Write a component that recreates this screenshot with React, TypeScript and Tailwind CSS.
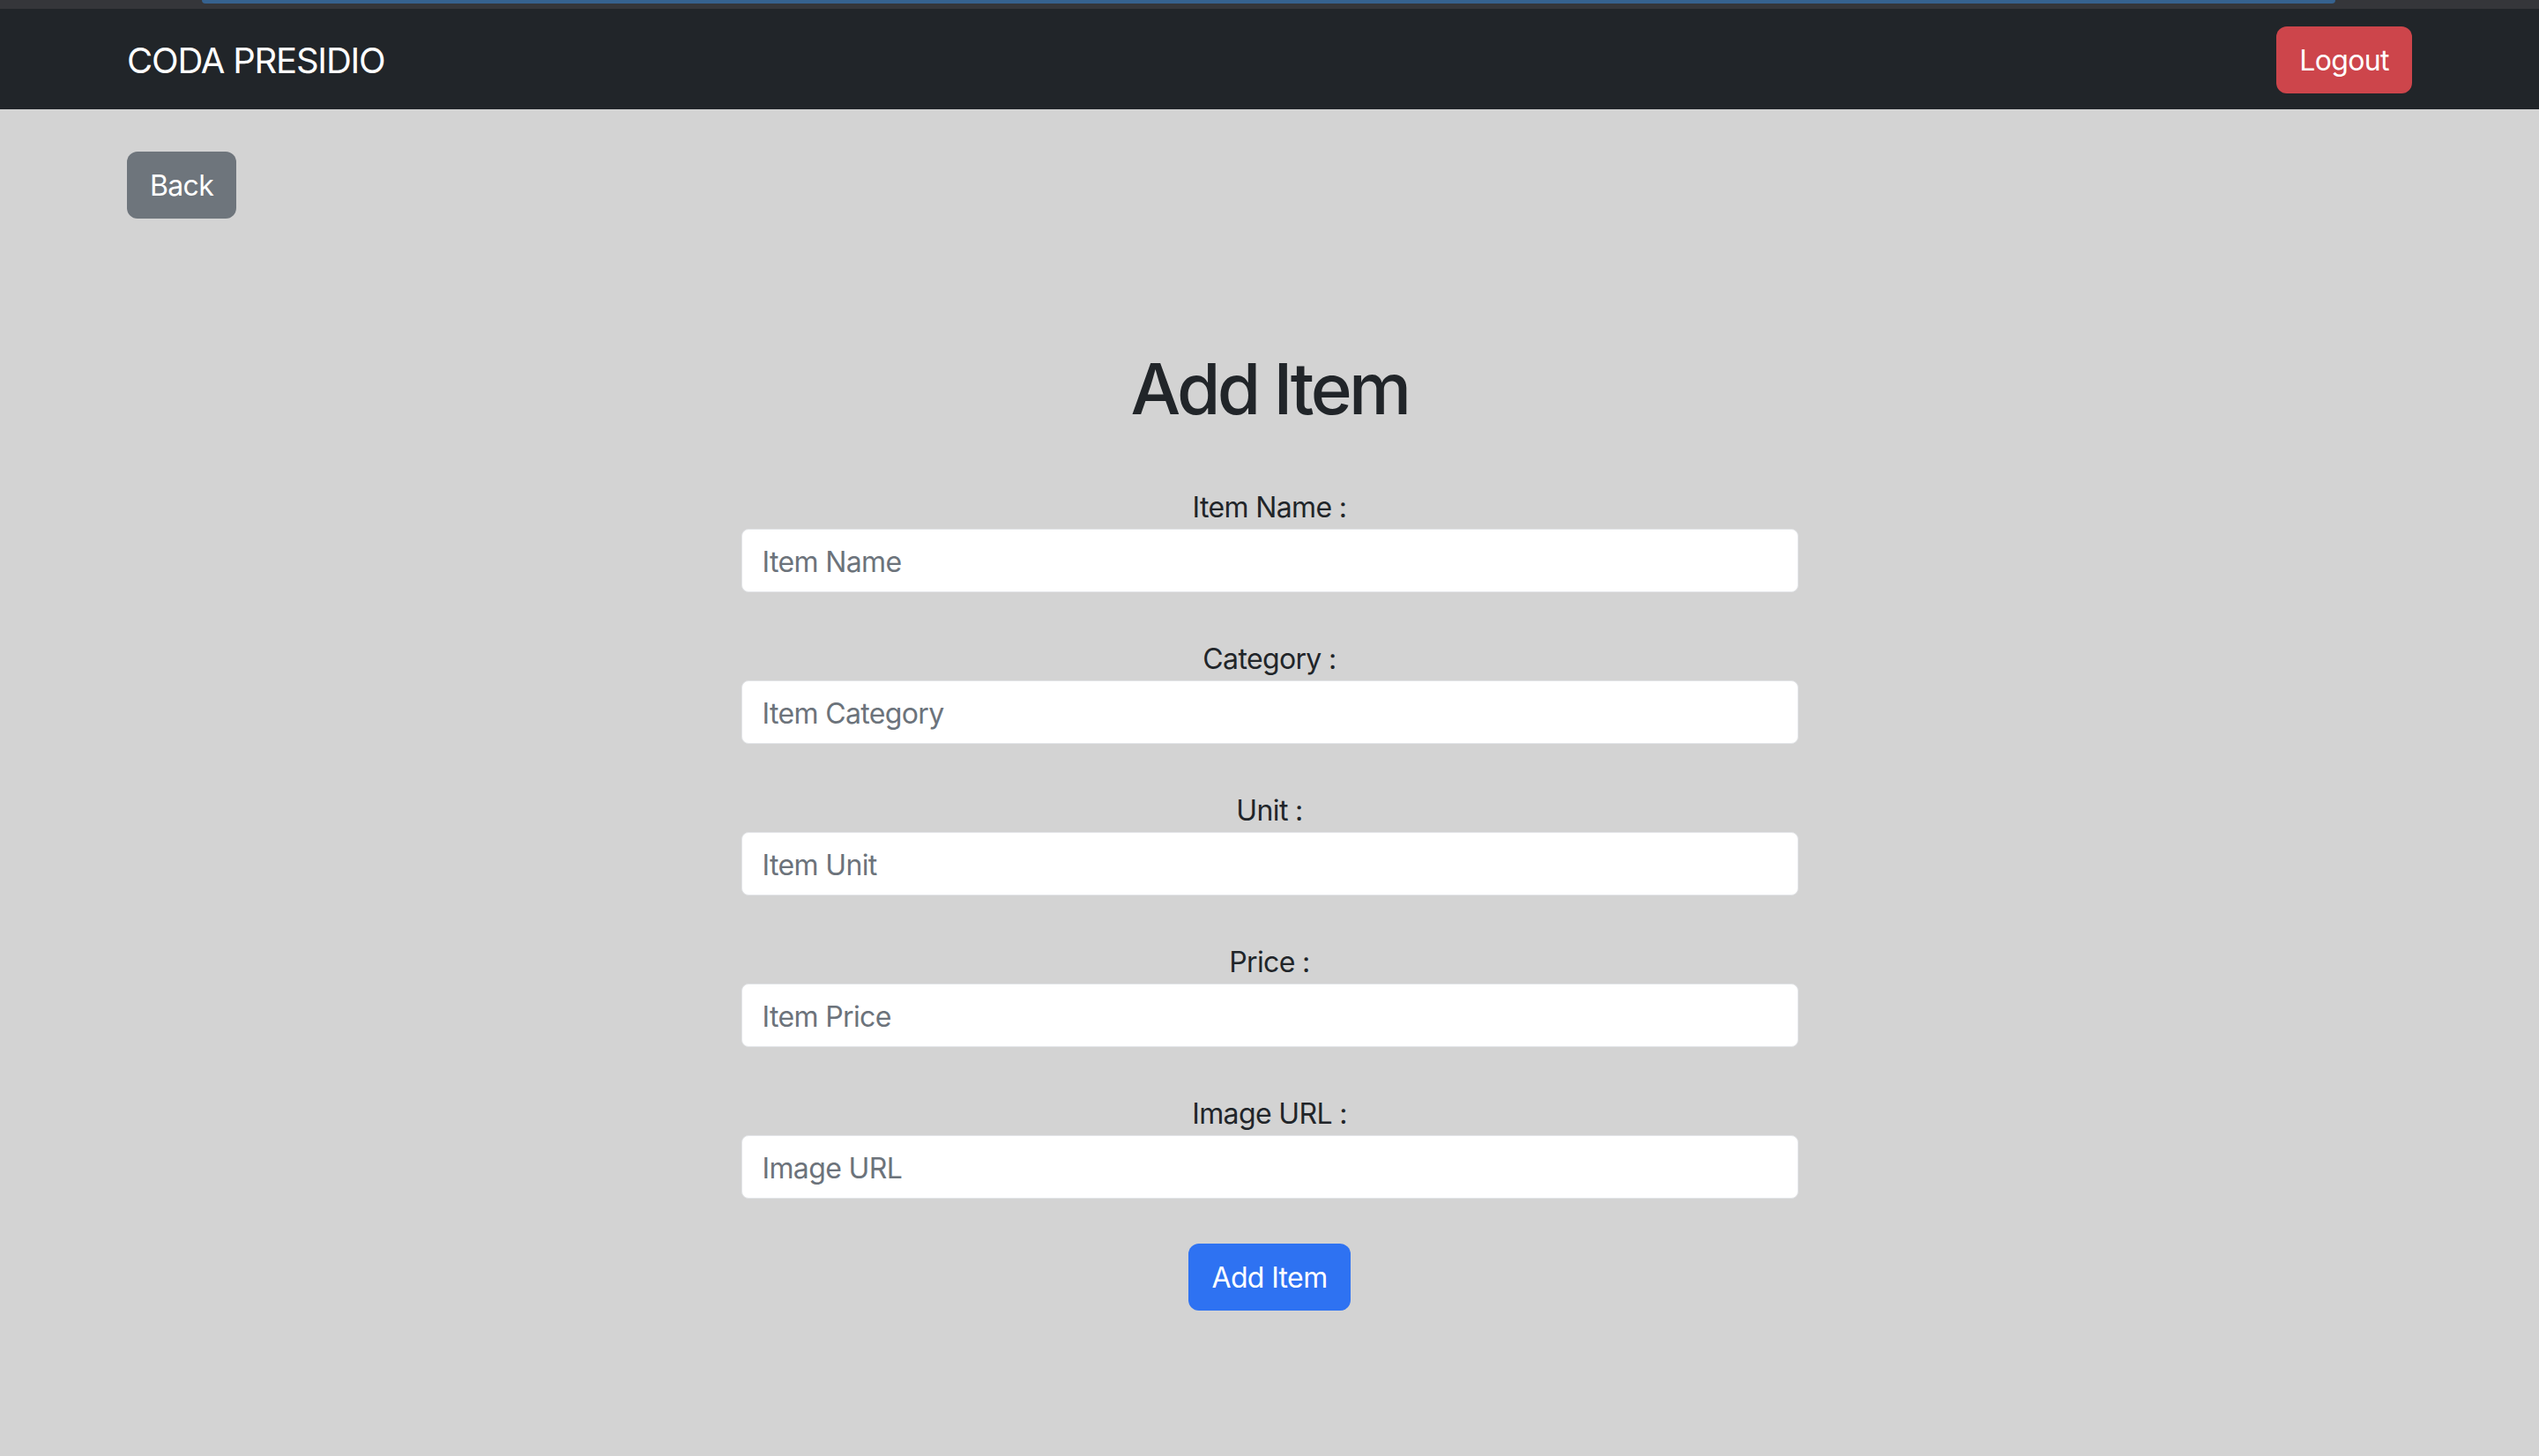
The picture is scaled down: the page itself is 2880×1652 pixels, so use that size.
import React from "react";

const fields = [
  { label: "Item Name :", placeholder: "Item Name" },
  { label: "Category :", placeholder: "Item Category" },
  { label: "Unit :", placeholder: "Item Unit" },
  { label: "Price :", placeholder: "Item Price" },
  { label: "Image URL :", placeholder: "Image URL" },
];

export default function App() {
  return (
    <div
      className="min-h-[1652px] w-full bg-[#d3d3d3] text-[#212529]"
      style={{ fontFamily: "Inter, 'Noto Sans', sans-serif" }}
    >
      <div className="relative h-[10px] w-full bg-[#35363a]">
        <div className="absolute left-[229px] top-0 h-[4px] w-[2420px] rounded-b-[4px] bg-[#36628f]" />
      </div>
      <nav className="flex h-[114px] items-center justify-between bg-[#212529] px-[144px]">
        <span className="pt-[3px] text-[40px] leading-[48px] tracking-[-0.03em] text-white">CODA PRESIDIO</span>
        <button className="mt-[2px] flex h-[76px] w-[154px] items-center justify-center rounded-[12px] bg-[#cd454b] pt-[2px] text-[32px] leading-[48px] tracking-[-0.02em] text-white">
          Logout
        </button>
      </nav>
      <div className="px-[144px] pt-[48px]">
        <button className="flex h-[76px] w-[124px] items-center justify-center rounded-[12px] bg-[#6e757c] pt-[2px] text-[32px] leading-[48px] tracking-[-0.02em] text-white">
          Back
        </button>
      </div>
      <div className="mt-[145px] flex flex-col items-center">
        <h1 className="text-[80px] font-medium leading-[96px] tracking-[-0.045em] text-[#212529]">Add Item</h1>
        <form className="mt-[63px] flex w-[1199px] flex-col gap-[52px]">
          {fields.map((f) => (
            <div key={f.label} className="flex flex-col">
              <label className="text-center text-[32px] leading-[48px] tracking-[-0.02em] text-[#212529]">{f.label}</label>
              <input
                placeholder={f.placeholder}
                className="h-[72px] w-full rounded-[8px] border border-[#e3e5e8] bg-white px-[23px] pt-[3px] text-[32px] tracking-[-0.02em] text-[#212529] outline-none placeholder:text-[#6c737b]"
              />
            </div>
          ))}
        </form>
        <button className="mt-[51px] flex h-[76px] w-[184px] items-center justify-center rounded-[12px] bg-[#2e72f2] pt-[2px] text-[32px] leading-[48px] tracking-[-0.02em] text-white">
          Add Item
        </button>
      </div>
    </div>
  );
}
